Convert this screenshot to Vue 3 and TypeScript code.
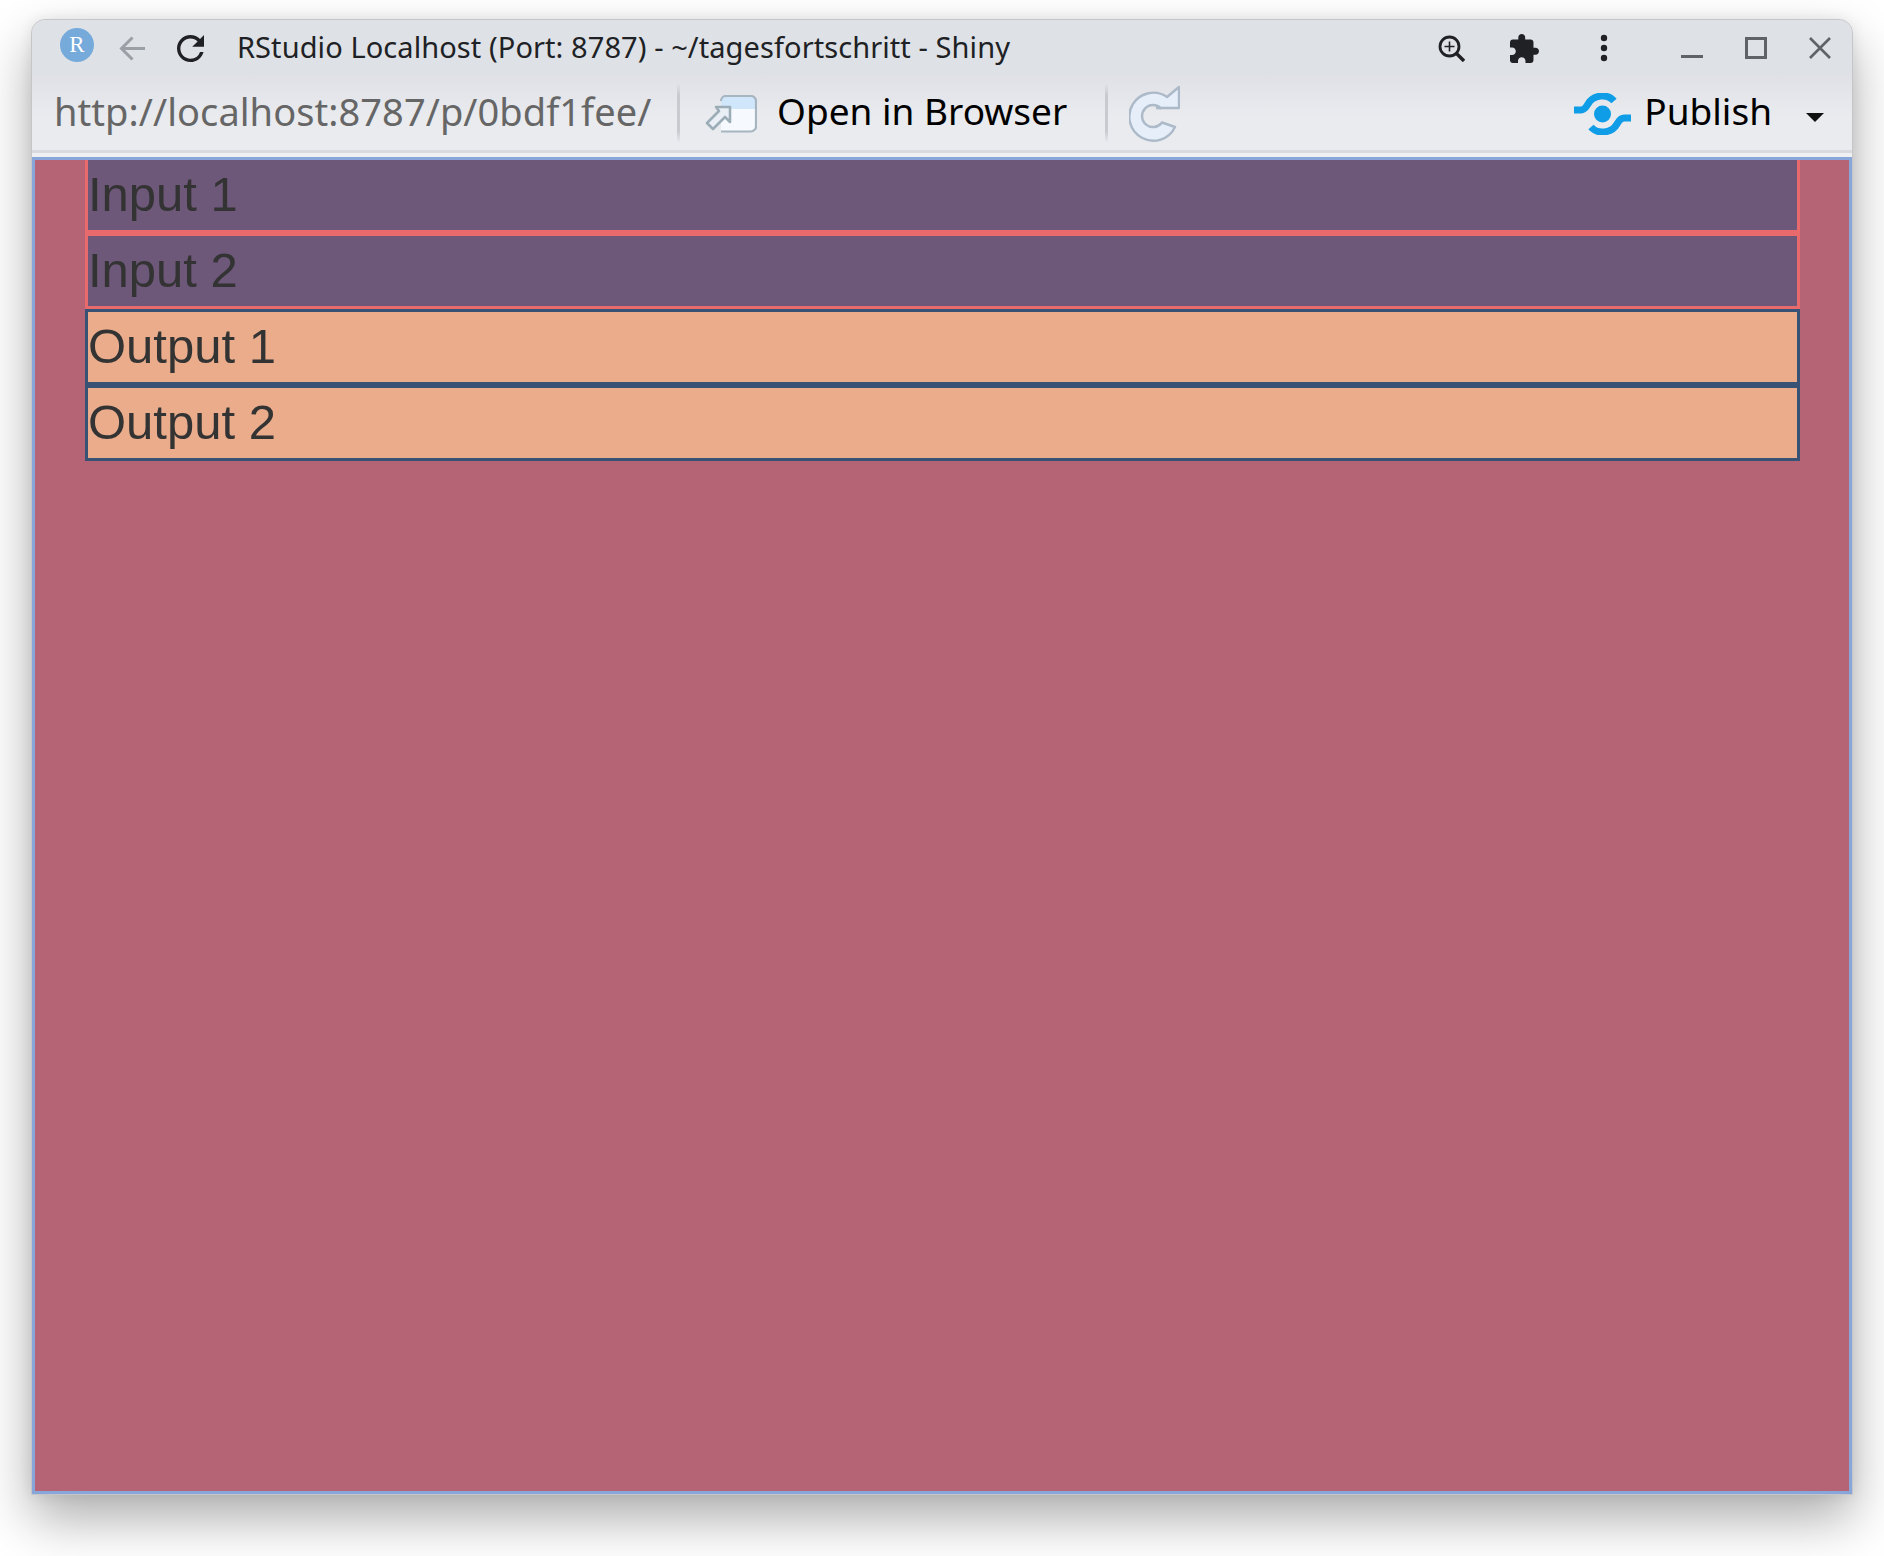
<script setup lang="ts">
interface PanelRow {
  label: string;
  kind: 'input' | 'output';
}

const rows: PanelRow[] = [
  { label: 'Input 1', kind: 'input' },
  { label: 'Input 2', kind: 'input' },
  { label: 'Output 1', kind: 'output' },
  { label: 'Output 2', kind: 'output' },
];
</script>

<template>
  <div class="page">
    <div class="window">
      <div class="titlebar">
        <svg class="r-logo" width="34" height="34" viewBox="0 0 34 34">
          <circle cx="17" cy="17" r="17" fill="#75aadb" />
          <text x="17" y="24" text-anchor="middle" class="r-letter">R</text>
        </svg>
        <svg class="back" width="26" height="25" viewBox="0 0 26 25" fill="none" stroke="#9aa0a6" stroke-width="3">
          <path d="M26 12.5H3M13.5 1.5L2.5 12.5L13.5 23.5" />
        </svg>
        <svg class="reload" width="27" height="27" viewBox="4 4 16 16" fill="#202124">
          <path d="M17.65 6.35A7.958 7.958 0 0 0 12 4c-4.42 0-7.99 3.58-7.99 8s3.57 8 7.99 8c3.73 0 6.84-2.55 7.73-6h-2.08A5.99 5.99 0 0 1 12 18c-3.31 0-6-2.69-6-6s2.69-6 6-6c1.66 0 3.14.69 4.22 1.78L13 11h7V4l-2.35 2.35z" />
        </svg>
        <span class="title">RStudio Localhost (Port: 8787) - ~/tagesfortschritt - Shiny</span>

        <svg class="zoom" width="27" height="27" viewBox="0 0 27 27" fill="none" stroke="#202124">
          <circle cx="11.5" cy="11.5" r="9.5" stroke-width="2.8" />
          <path d="M11.5 6.5v10M6.5 11.5h10" stroke-width="1.6" />
          <path d="M18.5 18.5L26 26" stroke-width="3.4" />
        </svg>
        <svg class="puzzle" width="29" height="29" viewBox="2 1 21 21" fill="#202124">
          <path d="M20.5 11H19V7c0-1.1-.9-2-2-2h-4V3.5C13 2.12 11.88 1 10.5 1S8 2.12 8 3.5V5H4c-1.1 0-1.99.9-1.99 2v3.8H3.5c1.49 0 2.7 1.21 2.7 2.7s-1.21 2.7-2.7 2.7H2V20c0 1.1.9 2 2 2h3.8v-1.5c0-1.49 1.21-2.7 2.7-2.7 1.49 0 2.7 1.21 2.7 2.7V22H17c1.1 0 2-.9 2-2v-4h1.5c1.38 0 2.5-1.12 2.5-2.5S21.88 11 20.5 11z" />
        </svg>
        <svg class="dots" width="8" height="28" viewBox="0 0 8 28" fill="#202124">
          <circle cx="4" cy="4" r="3.2" />
          <circle cx="4" cy="14" r="3.2" />
          <circle cx="4" cy="24" r="3.2" />
        </svg>
        <svg class="win-min" width="22" height="22" viewBox="0 0 22 22" fill="#5f6368">
          <rect x="0" y="18" width="22" height="3" />
        </svg>
        <svg class="win-max" width="22" height="22" viewBox="0 0 22 22" fill="none" stroke="#5f6368" stroke-width="3">
          <rect x="1.5" y="1.5" width="19" height="19" />
        </svg>
        <svg class="win-close" width="22" height="22" viewBox="0 0 22 22" fill="none" stroke="#5f6368" stroke-width="2.6">
          <path d="M1 1L21 21M21 1L1 21" />
        </svg>
      </div>

      <div class="toolbar">
        <span class="url">http://localhost:8787/p/0bdf1fee/</span>
        <div class="sep"></div>
        <svg class="open-icon" width="53" height="38" viewBox="0 0 53 38">
          <path d="M17 13V6a5 5 0 0 1 5-5h25a5 5 0 0 1 5 5v8H17z" fill="#cfe6fb" />
          <rect x="17" y="14" width="35" height="23" fill="#f6f9fd" />
          <path d="M17 36.5H47a5 5 0 0 0 5-5V6a5 5 0 0 0-5-5H22a5 5 0 0 0-5 5" fill="none" stroke="#a6b5bf" stroke-width="2.2" />
          <path d="M12 12H26V27L21 22L9 34L3 28L15 16Z" fill="#e9eff4" stroke="#9dadb8" stroke-width="2.6" stroke-linejoin="round" />
        </svg>
        <span class="open-label">Open in Browser</span>
        <div class="sep"></div>
        <svg class="refresh-icon" width="51" height="56" viewBox="0 0 51 56">
          <path d="M46 41A24 24 0 1 1 38 11L50 1V22H28L32 22.4A11 11 0 1 0 33 36.5Z" fill="#e6eefa" stroke="#acb9c8" stroke-width="2.4" stroke-linejoin="round" />
        </svg>

        <svg class="publish-icon" width="57" height="42" viewBox="0 0 57 42" fill="none" stroke="#0e9de6" stroke-width="7">
          <circle cx="28.5" cy="21" r="8.5" fill="#0e9de6" stroke="none" />
          <path d="M0 17H7C11 17 12 14 14 11C19 2 33 0 40 8" />
          <path d="M0 17H7C11 17 12 14 14 11C19 2 33 0 40 8" transform="rotate(180 28.5 21)" />
        </svg>
        <span class="publish-label">Publish</span>
        <div class="caret"></div>
      </div>
      <div class="toolbar-rule"></div>

      <div class="viewer">
        <div v-for="row in rows" :key="row.label" class="row" :class="row.kind">{{ row.label }}</div>
      </div>
    </div>
  </div>
</template>

<style>
html,
body {
  background: #fff;
}
</style>

<style scoped>
.page {
  box-sizing: border-box;
  width: 1884px;
  height: 1556px;
  padding: 19px 31px 61px;
  overflow: hidden;
}

.window {
  display: flex;
  flex-direction: column;
  width: 1822px;
  height: 1476px;
  box-sizing: border-box;
  border: 1px solid #c6c6c8;
  border-radius: 14px 14px 0 0;
  background: #dee1e6;
  overflow: hidden;
  box-shadow: 0 24px 52px rgba(0, 0, 0, 0.32), 0 0 14px rgba(0, 0, 0, 0.08);
}

.titlebar {
  display: flex;
  align-items: center;
  flex: none;
  height: 56px;
  padding: 0 21px 0 28px;
  background: #dee1e6;
}

.r-logo {
  margin-bottom: 6px;
}

.r-letter {
  font-family: 'Liberation Serif', serif;
  font-size: 23px;
  fill: #fff;
}

.back {
  margin-left: 25px;
}

.reload {
  margin-left: 32px;
}

.title {
  margin-left: 33px;
  margin-bottom: 3px;
  font-family: 'Noto Sans', sans-serif;
  font-size: 29px;
  letter-spacing: 0.08px;
  color: #202124;
  white-space: nowrap;
}

.zoom {
  margin-left: auto;
}

.puzzle {
  margin-left: 45px;
}

.dots {
  margin-left: 61px;
}

.win-min {
  margin-left: 73px;
}

.win-max {
  margin-left: 42px;
}

.win-close {
  margin-left: 42px;
}

.toolbar {
  display: flex;
  align-items: center;
  flex: none;
  height: 74px;
  padding: 0 28px 0 22px;
  background: linear-gradient(#dfe1e6, #e9ebef 55%);
}

.url {
  width: 623px;
  margin-bottom: 4px;
  font-family: 'Noto Sans', sans-serif;
  font-size: 38px;
  letter-spacing: 0.06px;
  color: #666;
  white-space: nowrap;
}

.sep {
  flex: none;
  width: 3px;
  height: 60px;
  background: linear-gradient(rgba(200, 202, 208, 0), #c8cad0 20%, #c8cad0 80%, rgba(200, 202, 208, 0));
}

.open-icon {
  margin-left: 24px;
  margin-top: 2px;
}

.open-label {
  width: 328px;
  margin-left: 20px;
  margin-bottom: 5px;
  font-family: 'Noto Sans', sans-serif;
  font-size: 37px;
  color: #000;
  white-space: nowrap;
}

.refresh-icon {
  margin-left: 21px;
  margin-top: 2px;
}

.publish-icon {
  margin-left: auto;
  margin-top: 2px;
}

.publish-label {
  margin-left: 13px;
  margin-bottom: 5px;
  font-family: 'Noto Sans', sans-serif;
  font-size: 37px;
  color: #000;
  white-space: nowrap;
}

.caret {
  flex: none;
  width: 0;
  height: 0;
  margin-left: 34px;
  margin-top: 8px;
  border-left: 9px solid transparent;
  border-right: 9px solid transparent;
  border-top: 9px solid #111;
}

.toolbar-rule {
  flex: none;
  height: 7px;
  box-sizing: border-box;
  border-top: 3px solid #d9dadf;
  background: #eff0f2;
}

.viewer {
  flex: 1;
  padding: 0 49px 0 50px;
  border: 3px solid #88a6d9;
  background: #b56475;
}

.row {
  box-sizing: border-box;
  height: 76px;
  border: 3px solid;
  font-family: 'Liberation Sans', Arial, sans-serif;
  font-size: 49px;
  line-height: 68px;
  color: #333;
}

.row:first-child {
  height: 73px;
  border-top: 0;
}

.input {
  border-color: #e96a6c;
  background: #6e5879;
}

.output {
  border-color: #375274;
  background: #ebac8c;
}
</style>
